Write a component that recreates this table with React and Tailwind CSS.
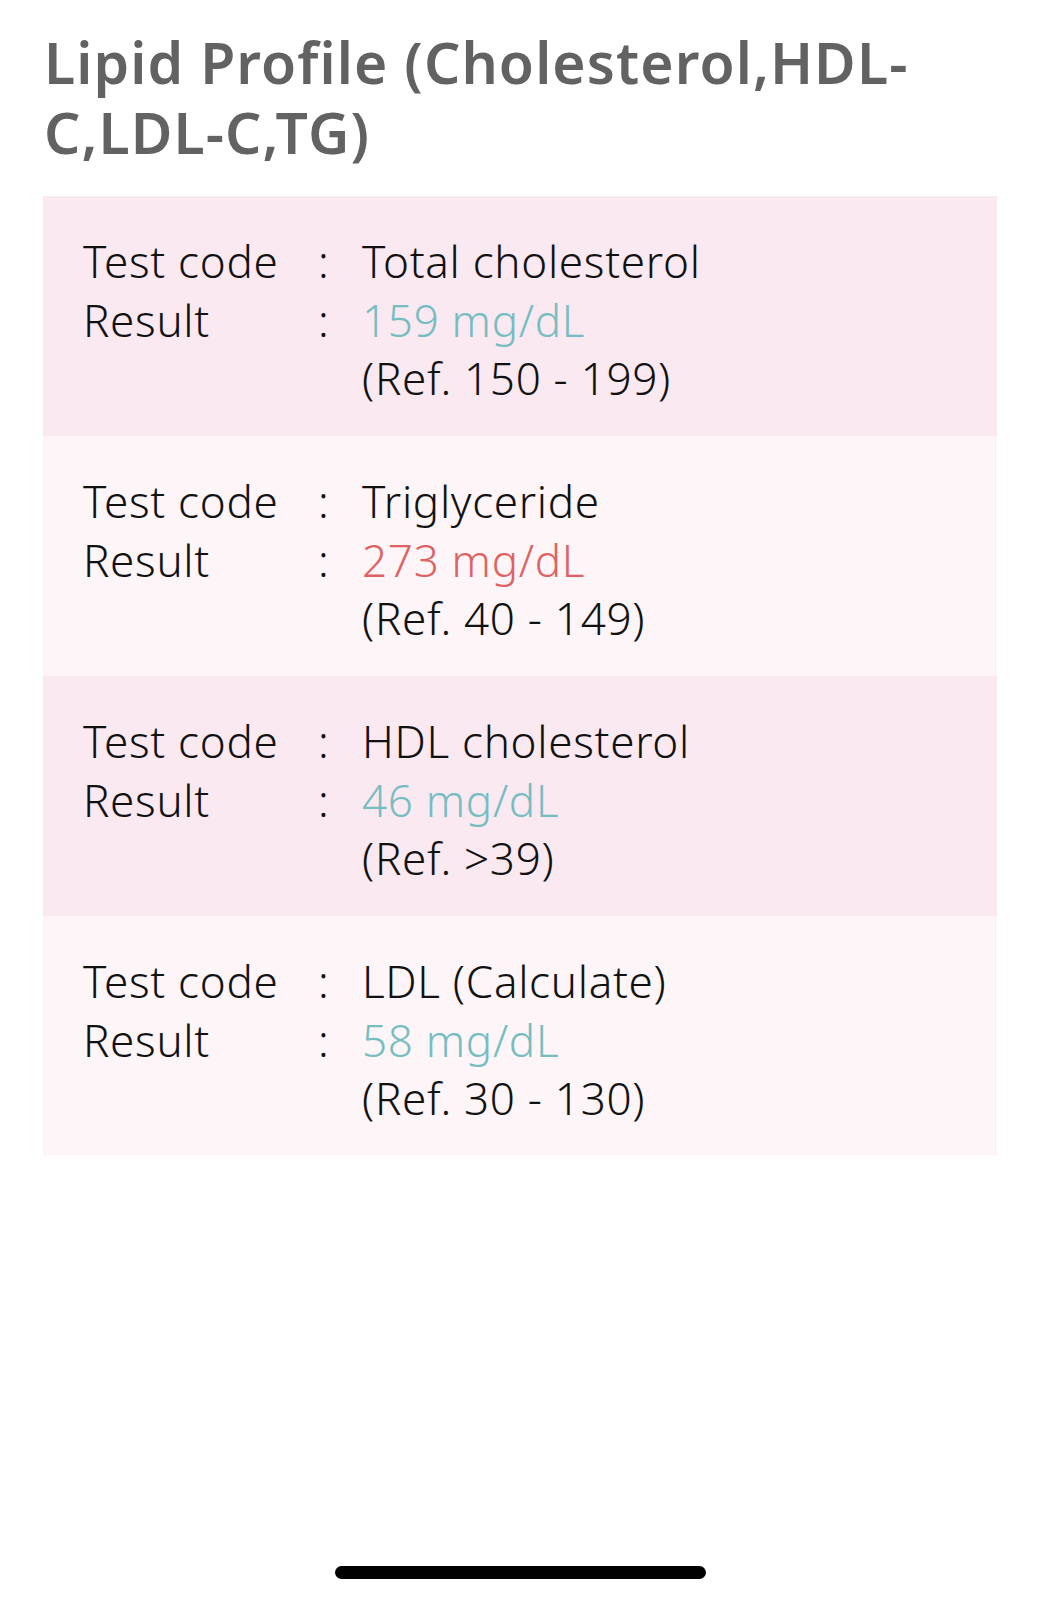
import React from "react";

const rows = [
  { code: "Total cholesterol", value: "159 mg/dL", ref: "(Ref. 150 - 199)", high: false, bg: "bg-[#fae9f1]" },
  { code: "Triglyceride", value: "273 mg/dL", ref: "(Ref. 40 - 149)", high: true, bg: "bg-[#fdf5f8]" },
  { code: "HDL cholesterol", value: "46 mg/dL", ref: "(Ref. >39)", high: false, bg: "bg-[#fae9f1]" },
  { code: "LDL (Calculate)", value: "58 mg/dL", ref: "(Ref. 30 - 130)", high: false, bg: "bg-[#fdf5f8]" },
];

export default function App() {
  return (
    <div className="w-[1040px] h-[1600px] bg-white flex flex-col font-['Noto_Sans',sans-serif]">
      <h1 className="pl-[44px] pr-[40px] pt-[27px] text-[57px] leading-[70px] tracking-[1.1px] font-semibold text-[#626262]">
        Lipid Profile (Cholesterol,HDL-
        <br />
        C,LDL-C,TG)
      </h1>
      <div className="mx-[43px] w-[954px] mt-[29px] flex flex-col">
        {rows.map((r, i) => (
          <div key={i} className={`${r.bg} h-[240px] pt-[36px] pl-[40px]`}>
            <div className="grid grid-cols-[235px_44px_1fr] text-[44px] leading-[58.5px] tracking-[0.7px] font-light text-[#111]">
              <div>Test code</div>
              <div>:</div>
              <div>{r.code}</div>
              <div>Result</div>
              <div>:</div>
              <div className={r.high ? "text-[#de6262]" : "text-[#76bdc2]"}>{r.value}</div>
              <div></div>
              <div></div>
              <div>{r.ref}</div>
            </div>
          </div>
        ))}
      </div>
      <div className="flex-1" />
      <div className="flex justify-center pb-[21px]">
        <div className="w-[371px] h-[13px] rounded-full bg-black" />
      </div>
    </div>
  );
}
